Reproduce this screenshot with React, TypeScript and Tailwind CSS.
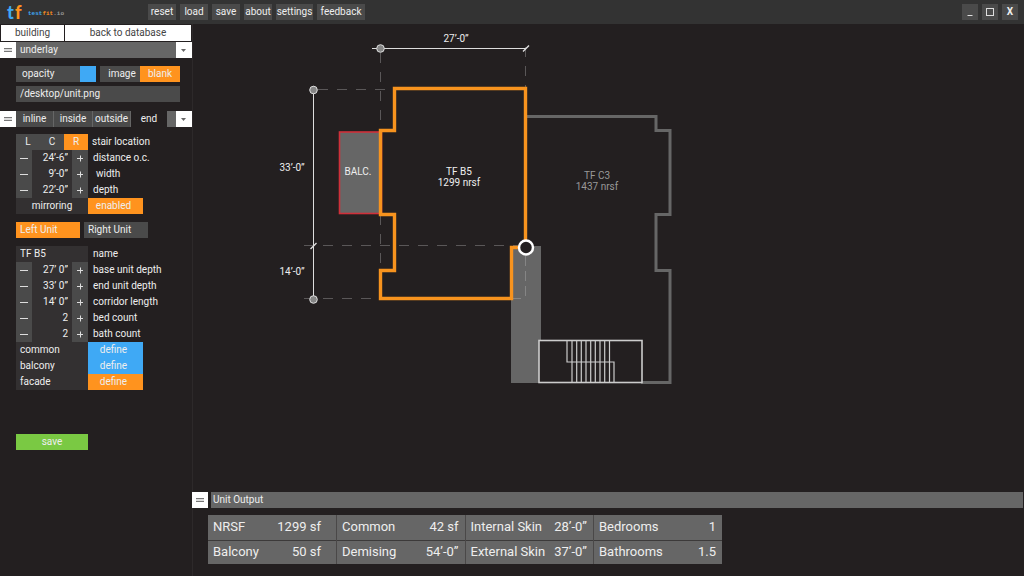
import { useState } from "react";

const MENU = [
    { label: "reset", width: "w-7" },
    { label: "load", width: "w-7" },
    { label: "save", width: "w-7" },
    { label: "about", width: "w-7" },
    { label: "settings", width: "w-[37px]" },
    { label: "feedback", width: "w-12" },
];

const TABS = [
    { label: "inline", width: "w-[38px]" },
    { label: "inside", width: "w-[39px]" },
    { label: "outside", width: "w-[38px]" },
    { label: "end", width: "w-9" },
];

const OUTPUT = [
    [["NRSF", "1299 sf"], ["Common", "42 sf"], ["Internal Skin", "28’-0”"], ["Bedrooms", "1"]],
    [["Balcony", "50 sf"], ["Demising", "54’-0”"], ["External Skin", "37’-0”"], ["Bathrooms", "1.5"]],
];

const TREADS = [572, 576.7, 581.3, 586, 590.7, 595.3, 600, 604.7, 609.5];

export default function App() {
    return (
        <div className="flex min-h-screen flex-col bg-[#231f20] font-['Roboto',sans-serif] text-[10px] leading-4 text-[#eeeeee]">
            <TopBar />
            <div className="flex flex-1">
                <Sidebar />
                <main className="flex min-w-0 flex-1 flex-col">
                    <div className="flex min-h-[467px] flex-1">
                        <FloorPlan />
                    </div>
                    <UnitOutput />
                </main>
            </div>
        </div>
    );
}

function TopBar() {
    return (
        <header className="flex h-6 items-center bg-[#333333] pr-1.5">
            <a href="#" className="w-[148px]">
                <svg width="72" height="24" viewBox="0 0 72 24" aria-label="testfit.io">
                    <g fontFamily="Lato, sans-serif" fontSize="18" fontWeight="900">
                        <text x="7" y="19" fill="#3fa9f5">t</text>
                        <text x="15" y="19" fill="#ff931e">f</text>
                    </g>
                    <text x="28" y="15" fontFamily="Liberation Mono, monospace" fontSize="6" fontWeight="700" fill="#3fa9f5">
                        test<tspan fill="#ff931e">fit</tspan><tspan fill="#999999">.io</tspan>
                    </text>
                </svg>
            </a>
            <nav className="flex gap-1">
                {MENU.map((item) => (
                    <button key={item.label} className={`${item.width} flex h-4 justify-center bg-[#4a4a4a]`}>
                        {item.label}
                    </button>
                ))}
            </nav>
            <div className="ml-auto flex gap-1">
                <button aria-label="Minimize" className="flex size-4 items-center justify-center bg-[#4a4a4a]">
                    <svg width="16" height="16" stroke="#dddddd"><path d="M5.5 11.5h5" /></svg>
                </button>
                <button aria-label="Maximize" className="flex size-4 items-center justify-center bg-[#4a4a4a]">
                    <svg width="16" height="16" stroke="#dddddd" fill="none"><rect x="4.5" y="4.5" width="7" height="7" /></svg>
                </button>
                <button className="flex size-4 justify-center bg-[#4a4a4a] font-bold">X</button>
            </div>
        </header>
    );
}

function Sidebar() {
    const [tab, setTab] = useState("end");
    const [stair, setStair] = useState("R");
    const [unit, setUnit] = useState("Left Unit");

    return (
        <aside className="w-48 shrink-0 pt-px shadow-[1px_0_0_#2d292a]">
            <div className="flex gap-px px-px text-[#444444]">
                <button className="w-[63px] bg-white">building</button>
                <button className="flex-1 bg-white">back to database</button>
            </div>

            <div className="mt-px flex">
                <GripButton />
                <h2 className="flex-1 bg-[#666666] pl-1">underlay</h2>
                <ArrowButton label="Collapse underlay" />
            </div>
            <div className="mt-2 flex pl-4">
                <div className="relative mr-1 h-4 w-20">
                    <input
                        id="opacity"
                        type="range"
                        defaultValue={100}
                        className="block h-4 w-20 appearance-none bg-[#4a4a4a] [&::-webkit-slider-thumb]:size-4 [&::-webkit-slider-thumb]:appearance-none [&::-webkit-slider-thumb]:bg-[#3fa9f5]"
                    />
                    <label htmlFor="opacity" className="pointer-events-none absolute inset-y-0 left-1.5">opacity</label>
                </div>
                <button className="w-10 bg-[#4a4a4a] pl-1">image</button>
                <button className="w-10 bg-[#ff931e]">blank</button>
            </div>
            <input
                aria-label="Underlay file"
                defaultValue="/desktop/unit.png"
                className="mt-1 ml-4 block h-4 w-41 bg-[#4a4a4a] pl-1"
            />

            <div className="mt-2 flex pt-px">
                <GripButton />
                <div className="flex flex-1 bg-[#666666]">
                    {TABS.map((t) => (
                        <button
                            key={t.label}
                            onClick={() => setTab(t.label)}
                            className={`${t.width} border-r border-[#666666] last:border-r-0 ${tab === t.label ? "bg-[#231f20]" : "bg-[#4a4a4a]"}`}
                        >
                            {t.label}
                        </button>
                    ))}
                </div>
                <ArrowButton label="Collapse tab" />
            </div>

            <div className="mt-[7px] pl-4">
                <div className="flex">
                    {["L", "C", "R"].map((s) => (
                        <button
                            key={s}
                            onClick={() => setStair(s)}
                            className={`w-6 ${stair === s ? "bg-[#ff931e]" : "bg-[#4a4a4a]"}`}
                        >
                            {s}
                        </button>
                    ))}
                    <span className="pl-1">stair location</span>
                </div>
                <Stepper label="distance o.c." value="24’-6”" />
                <Stepper label="width" value="9’-0”" indent="pl-2" />
                <Stepper label="depth" value="22’-0”" />
                <div className="flex">
                    <span className="w-18 bg-[#333031] text-center">mirroring</span>
                    <button className="w-[55px] bg-[#ff931e] pr-1">enabled</button>
                </div>

                <div className="mt-2 flex gap-1">
                    {["Left Unit", "Right Unit"].map((u) => (
                        <button
                            key={u}
                            onClick={() => setUnit(u)}
                            className={`w-16 pl-1 text-left ${unit === u ? "bg-[#ff931e]" : "bg-[#4a4a4a]"}`}
                        >
                            {u}
                        </button>
                    ))}
                </div>

                <div className="mt-2 flex">
                    <input id="name" defaultValue="TF B5" className="h-4 w-18 bg-[#333031] pl-1" />
                    <label htmlFor="name" className="pl-[5px]">name</label>
                </div>
                <Stepper label="base unit depth" value="27’ 0”" />
                <Stepper label="end unit depth" value="33’ 0”" />
                <Stepper label="corridor length" value="14’ 0”" />
                <Stepper label="bed count" value="2" />
                <Stepper label="bath count" value="2" />
                <DefineRow label="common" color="bg-[#3fa9f5]" />
                <DefineRow label="balcony" color="bg-[#3fa9f5]" />
                <DefineRow label="facade" color="bg-[#ff931e]" />

                <button className="mt-11 block w-18 bg-[#7ac943]">save</button>
            </div>
        </aside>
    );
}

function GripButton() {
    return (
        <button aria-label="Move panel" className="size-4 bg-white">
            <svg width="16" height="16" stroke="#777777" strokeWidth="1.4"><path d="M4 6.6h8M4 9.4h8" /></svg>
        </button>
    );
}

function ArrowButton({ label }: { label: string }) {
    return (
        <button aria-label={label} className="size-4 bg-white">
            <svg width="16" height="16" fill="#666666"><path d="M5 7h5l-2.5 3z" /></svg>
        </button>
    );
}

function Stepper({ label, value, indent = "pl-[5px]" }: { label: string, value: string, indent?: string }) {
    const id = label.replace(/\W+/g, "-");
    return (
        <div className="flex h-4">
            <button aria-label={`Decrease ${label}`} className="w-4 bg-[#4a4a4a]">
                <svg width="16" height="16" stroke="#dddddd"><path d="M4 8.5h8" /></svg>
            </button>
            <input id={id} defaultValue={value} className="w-10 bg-[#333031] pr-1 text-right" />
            <button aria-label={`Increase ${label}`} className="w-4 bg-[#4a4a4a]">
                <svg width="16" height="16" stroke="#dddddd"><path d="M5 8.5h6M8.5 5.5v6" /></svg>
            </button>
            <label htmlFor={id} className={indent}>{label}</label>
        </div>
    );
}

function DefineRow({ label, color }: { label: string, color: string }) {
    return (
        <div className="flex">
            <span className="w-18 bg-[#333031] pl-1">{label}</span>
            <button className={`w-[55px] pr-1 ${color}`}>define</button>
        </div>
    );
}

function FloorPlan() {
    return (
        <svg className="w-full flex-1" viewBox="192 24 832 468" fill="none" fontSize="10">
            {/* corridor */}
            <rect x="511" y="246" width="30" height="137" fill="#666666" />

            {/* guides */}
            <g stroke="#5a5758" strokeDasharray="10 9">
                <path d="M318 89.5H394" />
                <path d="M380.5 53V130" />
                <path d="M380.5 215V270" />
                <path d="M304 245.5H520" />
                <path d="M304 298.5H380" />
                <path d="M525.5 47V88" />
            </g>
            <path d="M525.5 256V299M511 298.5H526" stroke="#858585" strokeDasharray="10 5" />

            {/* neighbour unit */}
            <path d="M526 116.5H656V130.5H670V214.5H656V270.5H670V382.5H641" stroke="#666666" strokeWidth="3" />

            {/* stairs */}
            <rect x="539" y="340.5" width="103" height="42" fill="#231f20" stroke="#cccccc" strokeWidth="1.6" />
            <g stroke="#cccccc" strokeWidth="1.2">
                {TREADS.map((x) => (
                    <path key={x} d={`M${x} 341V383`} />
                ))}
                <path d="M567 341V362H614V383" />
            </g>

            {/* selected unit */}
            <rect x="339.5" y="132" width="42" height="81.5" fill="#666666" stroke="#d0303a" strokeWidth="1.6" />
            <path
                d="M525.5 247V88.5H394.5V130.5H380.5V214.5H394.5V270.5H380.5V298.5H511.5V247.5H525.5"
                stroke="#f7931e"
                strokeWidth="3.4"
            />
            <circle cx="526" cy="247.5" r="7" fill="#231f20" stroke="#ffffff" strokeWidth="2.5" />

            {/* dimensions */}
            <g stroke="#dddddd">
                <path d="M372 48.5H526M313.5 86V302" />
                <path d="M523 51.5L529 45.5M310.5 249L316.5 243" strokeWidth="1.4" />
                <circle cx="380.5" cy="48.5" r="3.8" fill="#858585" />
                <circle cx="313.5" cy="90" r="3.8" fill="#858585" />
                <circle cx="313.5" cy="299.5" r="3.8" fill="#858585" />
            </g>

            <g fill="#eeeeee" textAnchor="middle">
                <text x="456" y="42">27’-0”</text>
                <text x="292" y="171">33’-0”</text>
                <text x="292" y="275">14’-0”</text>
                <text x="358" y="175">BALC.</text>
                <text x="459" y="175">TF B5</text>
                <text x="459" y="186">1299 nrsf</text>
            </g>
            <g fill="#999999" textAnchor="middle">
                <text x="597" y="179">TF C3</text>
                <text x="597" y="190">1437 nrsf</text>
            </g>
        </svg>
    );
}

function UnitOutput() {
    return (
        <section className="pb-3">
            <div className="flex gap-[3px] pr-px">
                <GripButton />
                <h2 className="flex-1 bg-[#666666] pl-0.5">Unit Output</h2>
            </div>
            <table className="mt-[7px] ml-4 w-[514px] table-fixed border-collapse text-[13px]">
                <tbody>
                    {OUTPUT.map((row, r) => (
                        <tr key={r} className="h-6 border-b border-[#3c3a3a] bg-[#666666] first:h-[25px] last:border-b-0">
                            {row.map(([name, value]) => (
                                <td key={name} className="border-r border-[#4a4848] pr-1.5 pl-[5px] first:pr-[15px] last:border-r-0">
                                    <div className="flex justify-between whitespace-nowrap">
                                        <span>{name}</span>
                                        <span>{value}</span>
                                    </div>
                                </td>
                            ))}
                        </tr>
                    ))}
                </tbody>
            </table>
        </section>
    );
}
